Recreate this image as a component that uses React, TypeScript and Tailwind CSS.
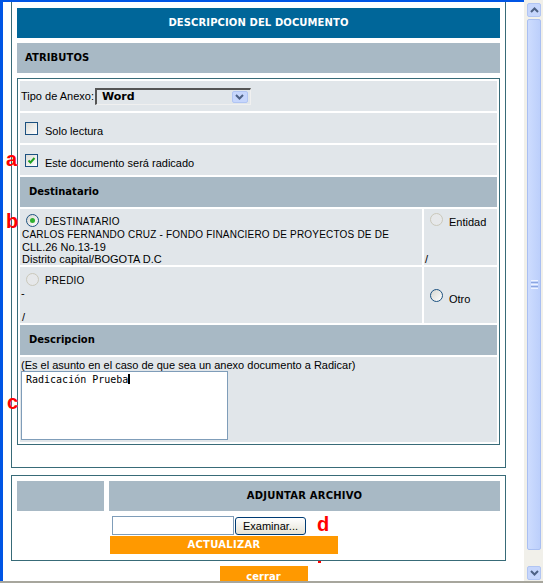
import React from 'react'

// old-style form: attribute table + attach-file box, XP window chrome around it
const HEAD = "font-['DejaVu_Sans',Verdana,sans-serif] font-bold text-[10px]"
const CELL = 'bg-[#e1e6ea]'
const BAR = 'bg-[#a8b9c5]'

function Chevron({ up = false, color = '#4d6185' }: { up?: boolean; color?: string }) {
  return (
    <svg width="9" height="6" viewBox="0 0 9 6">
      <path d={up ? 'M1 5 L4.5 1.5 L8 5' : 'M1 1 L4.5 4.5 L8 1'} stroke={color} strokeWidth="2" fill="none" />
    </svg>
  )
}

function Check({ checked = false, className = '' }: { checked?: boolean; className?: string }) {
  return (
    <span
      className={`flex w-[13px] h-[13px] shrink-0 items-center justify-center border border-[#1c5180] bg-linear-to-br from-[#dcdcd7] to-white ${className}`}
    >
      {checked && (
        <svg width="9" height="9" viewBox="0 0 9 9">
          <path d="M1.5 4.5 L3.5 6.5 L7.5 2" stroke="#21a121" strokeWidth="2" fill="none" />
        </svg>
      )}
    </span>
  )
}

function Radio({ state, className = '' }: { state: 'on' | 'off' | 'disabled'; className?: string }) {
  if (state === 'disabled') {
    return (
      <span className={`block w-[13px] h-[13px] shrink-0 rounded-full border border-[#cac8bb] bg-[#e6e8ea] ${className}`} />
    )
  }
  return (
    <span
      className={`flex w-[13px] h-[13px] shrink-0 items-center justify-center rounded-full border border-[#1c5180] bg-linear-to-br from-[#d6d6d0] to-white ${className}`}
    >
      {state === 'on' && <span className="block w-[5px] h-[5px] rounded-full bg-[#2fb02f]" />}
    </span>
  )
}

function Scrollbar() {
  return (
    <div className="w-[19px] shrink-0 bg-[#f1f0ea] flex flex-col pl-[3px] pr-[2px] pt-[3px] pb-[1px]">
      <div className="h-[14px] rounded-[2px] border border-[#b1c5f3] bg-[#c6d6fc] flex items-center justify-center">
        <Chevron up />
      </div>
      <div className="mt-[2px] h-[531px] rounded-[2px] border border-[#a9bff2] bg-linear-to-r from-[#cddcfe] to-[#bccffb] flex flex-col items-center justify-center gap-[1px]">
        <div className="w-[7px] h-[1px] bg-[#eef3ff]" />
        <div className="w-[7px] h-[1px] bg-[#8ca6e0]" />
        <div className="w-[7px] h-[1px] bg-[#eef3ff]" />
        <div className="w-[7px] h-[1px] bg-[#8ca6e0]" />
        <div className="w-[7px] h-[1px] bg-[#eef3ff]" />
      </div>
      <div className="flex-1" />
      <div className="h-[14px] rounded-[2px] border border-[#b1c5f3] bg-[#c6d6fc] flex items-center justify-center">
        <Chevron />
      </div>
    </div>
  )
}

const MARK = "absolute font-['Liberation_Sans',Arial,sans-serif] font-bold text-[20px] leading-[20px] text-[#ff0000]"

export default function App() {
  return (
    <div className="relative w-[543px] h-[583px] overflow-hidden bg-white flex flex-col font-['Liberation_Sans',Arial,sans-serif] text-[11px] leading-[12px] text-black">
      <div className="flex h-[581px]">
        <div className="w-[3px] shrink-0 bg-[#0055e5]" />
        <div className="w-[521px] flex flex-col">
          <div className="h-[2px] shrink-0 bg-[#0055e5]" />

          {/* main box */}
          <section className="ml-[8px] w-[495px] border-x border-b border-[#386b78] px-[5px] pt-[6px] pb-[22px] flex flex-col gap-[5px]">
            <div className={`h-[30px] bg-[#006699] flex items-center justify-center text-white tracking-[0.1px] ${HEAD}`}>
              DESCRIPCION DEL DOCUMENTO
            </div>
            <div className={`h-[30px] ${BAR} flex items-center pl-[8px] tracking-[0.1px] ${HEAD}`}>ATRIBUTOS</div>

            <div className="border border-[#386b78] p-[2px] flex flex-col gap-[2px]">
              <div className={`h-[30px] ${CELL} flex items-center pl-[1px]`}>
                <span className="whitespace-nowrap">Tipo de Anexo:</span>
                <div className="ml-[1px] w-[156px] h-[17px] border-t-2 border-l-2 border-t-[#555] border-l-[#555] border-b border-r border-b-[#f0f0f0] border-r-[#f0f0f0] bg-[#e1e6ea] flex items-center pl-[5px] pr-[2px]">
                  <span className="font-['DejaVu_Sans',Verdana,sans-serif] font-bold text-[11px]">Word</span>
                  <div className="ml-auto w-[16px] h-[12px] rounded-[2px] border border-[#b1c5f3] bg-[#c6d6fc] flex items-center justify-center">
                    <Chevron />
                  </div>
                </div>
              </div>

              <div className={`h-[30px] ${CELL} flex items-center`}>
                <Check className="ml-[5px]" />
                <span className="ml-[7px] pt-[6px]">Solo lectura</span>
              </div>

              <div className={`h-[30px] ${CELL} flex items-center`}>
                <Check checked className="ml-[5px]" />
                <span className="ml-[7px] pt-[6px]">Este documento será radicado</span>
              </div>

              <div className={`h-[30px] ${BAR} flex items-center pl-[9px] ${HEAD}`}>Destinatario</div>

              <div className="h-[56px] flex gap-[2px]">
                <div className={`w-[402px] ${CELL} pl-[2px] pt-[5px] flex flex-col whitespace-nowrap`}>
                  <div className="h-[15px] flex items-start">
                    <Radio state="on" className="ml-[4px]" />
                    <span className="ml-[6px] pt-[2px] text-[10px] tracking-[0.2px]">DESTINATARIO</span>
                  </div>
                  <div className="text-[10px] tracking-[0.2px]">CARLOS FERNANDO CRUZ - FONDO FINANCIERO DE PROYECTOS DE DE</div>
                  <div>CLL.26 No.13-19</div>
                  <div>Distrito capital/BOGOTA D.C</div>
                </div>
                <div className={`flex-1 ${CELL} pt-[4px] flex flex-col justify-between`}>
                  <div className="h-[15px] flex items-start">
                    <Radio state="disabled" className="ml-[6px]" />
                    <span className="ml-[6px] pt-[3px]">Entidad</span>
                  </div>
                  <div className="pl-[1px]">/</div>
                </div>
              </div>

              <div className="h-[56px] flex gap-[2px]">
                <div className={`w-[402px] ${CELL} pl-[1px] pt-[6px] flex flex-col`}>
                  <div className="h-[14px] flex items-start">
                    <Radio state="disabled" className="ml-[5px]" />
                    <span className="ml-[6px] pt-[2px] text-[10px] tracking-[0.2px]">PREDIO</span>
                  </div>
                  <div>-</div>
                  <div className="h-[12px]" />
                  <div className="pl-[1px]">/</div>
                </div>
                <div className={`flex-1 ${CELL} flex items-center`}>
                  <Radio state="off" className="ml-[6px]" />
                  <span className="ml-[6px] pt-[7px]">Otro</span>
                </div>
              </div>

              <div className={`h-[30px] ${BAR} flex items-center pl-[9px] ${HEAD}`}>Descripcion</div>

              <div className={`h-[85px] ${CELL} pl-[1px] pt-[2px] flex flex-col`}>
                <div className="whitespace-nowrap">(Es el asunto en el caso de que sea un anexo documento a Radicar)</div>
                <div className="w-[207px] h-[69px] border border-[#7f9db9] bg-white pl-[4px] pt-[2px] flex items-start font-['DejaVu_Sans_Mono','Liberation_Mono',monospace] text-[10px] leading-[12px]">
                  <span className="whitespace-nowrap">Radicación Prueba</span>
                  <span className="block w-[2px] h-[10px] bg-black" />
                </div>
              </div>
            </div>
          </section>

          {/* attach box */}
          <section className="ml-[8px] mt-[7px] w-[495px] border border-[#386b78] p-[5px] pb-[6px] grid grid-cols-[87px_391px] gap-[5px]">
            <div className={`h-[30px] ${BAR}`} />
            <div className={`h-[30px] ${BAR} flex items-center justify-center tracking-[0.2px] ${HEAD}`}>ADJUNTAR ARCHIVO</div>
            <div />
            <div className="flex flex-col">
              <div className="h-[19px] flex items-center">
                <div className="ml-[3px] w-[122px] h-[19px] border border-[#7f9db9] bg-white" />
                <div className="ml-[1px] w-[71px] h-[18px] rounded-[3px] border border-[#003c74] bg-linear-to-b from-white to-[#e6e3d6] flex items-center justify-center">
                  Examinar...
                </div>
              </div>
              <div className={`mt-[1px] ml-[1px] w-[228px] h-[18px] bg-[#ff9900] flex items-center justify-center text-white tracking-[0.3px] ${HEAD}`}>
                ACTUALIZAR
              </div>
            </div>
          </section>

          <div className={`mt-[5px] mx-auto w-[88px] h-[18px] shrink-0 bg-[#ff9900] flex items-center justify-center text-white pt-[4px] ${HEAD}`}>
            cerrar
          </div>
        </div>
        <Scrollbar />
      </div>
      <div className="h-[2px] bg-[#a7a69d]" />

      {/* red annotation letters */}
      <span className={`${MARK} left-[6px] top-[149px]`}>a</span>
      <span className={`${MARK} left-[6px] top-[211px]`}>b</span>
      <span className={`${MARK} left-[7px] top-[392px]`}>c</span>
      <span className={`${MARK} left-[317px] top-[514px]`}>d</span>
      <span className="absolute left-[318px] top-[561px] w-[3px] h-[2px] bg-[#ff0000]" />
    </div>
  )
}
